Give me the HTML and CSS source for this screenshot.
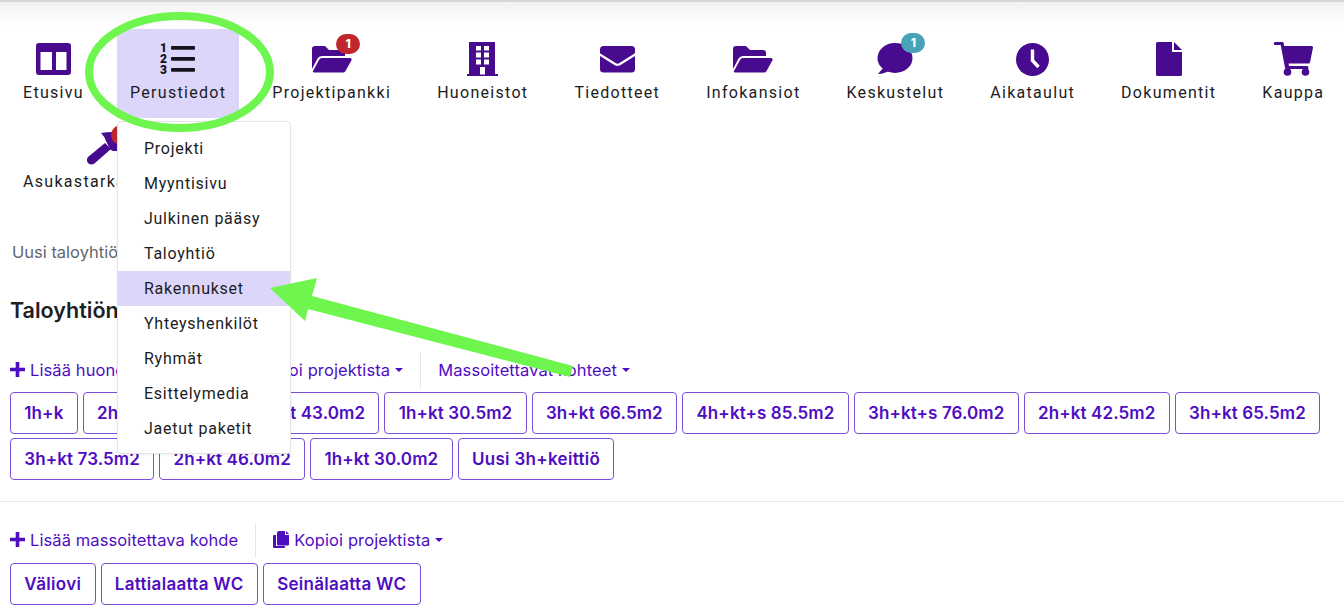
FILE: index.html
```html
<!DOCTYPE html>
<html lang="fi">
<head>
<meta charset="utf-8">
<title>Taloyhtiön huoneistotyypit</title>
<link rel="stylesheet" href="styles.css">
</head>
<body>
<div class="topshade"></div>
<nav class="nav">
  <a class="nav-item">
    <span class="icon-box"><svg width="35" height="32" viewBox="0 0 35 32"><path fill-rule="evenodd" d="M3 0h29a3 3 0 0 1 3 3v26a3 3 0 0 1-3 3H3a3 3 0 0 1-3-3V3a3 3 0 0 1 3-3zM4.500 9v18h11.500V9zM20 9v18h10.500V9z"/></svg></span>
    <span class="nav-label">Etusivu</span>
  </a>
  <div class="nav-group">
    <a class="nav-item nav-item-active">
      <span class="icon-box icon-dark"><svg class="icon-list" width="36" height="32" viewBox="0 0 36 32"><text class="num" x="0" y="9">1</text><text class="num" x="0" y="20">2</text><text class="num" x="0" y="31">3</text><rect x="11" y="3" width="24" height="3.800" rx="1"/><rect x="11" y="14" width="24" height="3.800" rx="1"/><rect x="11" y="25" width="24" height="3.800" rx="1"/></svg></span>
      <span class="nav-label">Perustiedot</span>
    </a>
    <ul class="menu">
      <li class="menu-item">Projekti</li>
      <li class="menu-item">Myyntisivu</li>
      <li class="menu-item">Julkinen pääsy</li>
      <li class="menu-item">Taloyhtiö</li>
      <li class="menu-item menu-item-active">Rakennukset</li>
      <li class="menu-item">Yhteyshenkilöt</li>
      <li class="menu-item">Ryhmät</li>
      <li class="menu-item">Esittelymedia</li>
      <li class="menu-item">Jaetut paketit</li>
    </ul>
  </div>
  <a class="nav-item">
    <span class="icon-box"><svg width="40" height="27" viewBox="0 0 40 27"><path d="M0 3a3 3 0 0 1 3-3h10l4 4h13a3 3 0 0 1 3 3v3H10a5 5 0 0 0-4.500 2.500L0 23z"/><path d="M10 12h28a1.600 1.600 0 0 1 1.500 2.300L33.500 25a3 3 0 0 1-2.600 1.500H2a1 1 0 0 1-1-1.500l6-11a3.500 3.500 0 0 1 3-2z"/></svg></span>
    <span class="badge badge-red">1</span>
    <span class="nav-label">Projektipankki</span>
  </a>
  <a class="nav-item">
    <span class="icon-box"><svg width="31" height="35" viewBox="0 0 31 35"><path fill-rule="evenodd" d="M2 0h26v32h3v2H0v-2h2zM9 4v4.500h5V4zM17 4v4.500h5V4zM9 10.500v5h5v-5zM17 10.500v5h5v-5zM9 17.500v5h5v-5zM17 17.500v5h5v-5zM13 25v7.500h5V25z"/></svg></span>
    <span class="nav-label">Huoneistot</span>
  </a>
  <a class="nav-item">
    <span class="icon-box"><svg width="35" height="27" viewBox="0 0 35 27"><rect width="35" height="26.500" rx="3.500"/><path class="cut" d="M-1 8l16 10q2.500 1.500 5 0L36 8"/></svg></span>
    <span class="nav-label">Tiedotteet</span>
  </a>
  <a class="nav-item">
    <span class="icon-box"><svg width="40" height="27" viewBox="0 0 40 27"><path d="M0 3a3 3 0 0 1 3-3h10l4 4h13a3 3 0 0 1 3 3v3H10a5 5 0 0 0-4.500 2.500L0 23z"/><path d="M10 12h28a1.600 1.600 0 0 1 1.500 2.300L33.500 25a3 3 0 0 1-2.600 1.500H2a1 1 0 0 1-1-1.500l6-11a3.500 3.500 0 0 1 3-2z"/></svg></span>
    <span class="nav-label">Infokansiot</span>
  </a>
  <a class="nav-item">
    <span class="icon-box"><svg width="36" height="32" viewBox="0 0 36 32"><ellipse cx="18" cy="15" rx="17.500" ry="15"/><path d="M7 24L1 31q4 .5 11-3z"/></svg></span>
    <span class="badge badge-teal">1</span>
    <span class="nav-label">Keskustelut</span>
  </a>
  <a class="nav-item">
    <span class="icon-box"><svg width="33" height="33" viewBox="0 0 33 33"><circle cx="16.500" cy="16.500" r="16.500"/><path class="hand" d="M16.500 6.500v11l6 6.500"/></svg></span>
    <span class="nav-label">Aikataulut</span>
  </a>
  <a class="nav-item">
    <span class="icon-box"><svg width="26" height="34" viewBox="0 0 26 34"><path d="M1.500 0H16v10h10v22.500a1.500 1.500 0 0 1-1.500 1.500h-23A1.500 1.500 0 0 1 0 32.500v-31A1.500 1.500 0 0 1 1.500 0z"/><path d="M18 0l8 8h-8z"/></svg></span>
    <span class="nav-label">Dokumentit</span>
  </a>
  <a class="nav-item">
    <span class="icon-box"><svg width="39" height="34" viewBox="0 0 39 34"><path d="M1.200 0h7a1.500 1.500 0 0 1 1.500 1.200L10.200 4h27.300a1.500 1.500 0 0 1 1.500 1.800l-3 14.500a1.500 1.500 0 0 1-1.500 1.200H14.500l.5 2.500H33a1.500 1.500 0 0 1 0 3H12.500a1.500 1.500 0 0 1-1.500-1.200L6.700 3H1.200a1.500 1.500 0 0 1 0-3z"/><circle cx="13.500" cy="30" r="3.800"/><circle cx="31.500" cy="30" r="3.800"/></svg></span>
    <span class="nav-label">Kauppa</span>
  </a>
  <a class="nav-item">
    <span class="icon-box icon-brush"><svg width="32" height="34" viewBox="0 0 32 34"><path d="M1 26L18 12l6 6L8 32a4.500 4.500 0 0 1-7-6z"/><path d="M14 2q6-1 12-1l6 3v16h-6q-3-1-4-4l-3-6q-1-4-5-8z"/></svg></span>
    <span class="badge badge-red badge-second">1</span>
    <span class="nav-label">Asukastarkastukset</span>
  </a>
</nav>
<main class="main">
  <p class="crumb">Uusi taloyhtiö</p>
  <h2 class="title">Taloyhtiön huoneistotyypit</h2>
  <div class="toolbar">
    <a class="tool tool-first"><svg class="tool-plus" width="15" height="15" viewBox="0 0 15 15"><path d="M5.700 0h3.600v5.700H15v3.600H9.300V15H5.700V9.300H0V5.700h5.700z"/></svg>Lisää huoneistotyyppi</a>
    <a class="tool tool-sep"><svg class="tool-copy" width="16" height="17" viewBox="0 0 16 17"><path d="M6 0h6v4h4v9.500a1 1 0 0 1-1 1H5a1 1 0 0 1-1-1V2a2 2 0 0 1 2-2z"/><path d="M13 0l3 3h-3z"/><path d="M0 5a1 1 0 0 1 1-1h2v11h9v1a1 1 0 0 1-1 1H1a1 1 0 0 1-1-1z"/></svg>Kopioi projektista<i class="caret"></i></a>
    <a class="tool tool-sep">Massoitettavat kohteet<i class="caret"></i></a>
  </div>
  <div class="buttons">
    <a class="btn">1h+k</a>
    <a class="btn">2h+kt 45.5m2</a>
    <a class="btn">2h+kt 43.0m2</a>
    <a class="btn">1h+kt 30.5m2</a>
    <a class="btn">3h+kt 66.5m2</a>
    <a class="btn">4h+kt+s 85.5m2</a>
    <a class="btn">3h+kt+s 76.0m2</a>
    <a class="btn">2h+kt 42.5m2</a>
    <a class="btn">3h+kt 65.5m2</a>
    <a class="btn">3h+kt 73.5m2</a>
    <a class="btn">2h+kt 46.0m2</a>
    <a class="btn">1h+kt 30.0m2</a>
    <a class="btn btn-word">Uusi 3h+keittiö</a>
  </div>
  <hr class="rule">
  <div class="toolbar toolbar-last">
    <a class="tool"><svg class="tool-plus" width="15" height="15" viewBox="0 0 15 15"><path d="M5.700 0h3.600v5.700H15v3.600H9.300V15H5.700V9.300H0V5.700h5.700z"/></svg>Lisää massoitettava kohde</a>
    <a class="tool tool-sep"><svg class="tool-copy" width="16" height="17" viewBox="0 0 16 17"><path d="M6 0h6v4h4v9.500a1 1 0 0 1-1 1H5a1 1 0 0 1-1-1V2a2 2 0 0 1 2-2z"/><path d="M13 0l3 3h-3z"/><path d="M0 5a1 1 0 0 1 1-1h2v11h9v1a1 1 0 0 1-1 1H1a1 1 0 0 1-1-1z"/></svg>Kopioi projektista<i class="caret"></i></a>
  </div>
  <div class="buttons">
    <a class="btn btn-word">Väliovi</a>
    <a class="btn btn-word">Lattialaatta WC</a>
    <a class="btn btn-word">Seinälaatta WC</a>
  </div>
</main>
<svg class="annotation" width="1344" height="614" viewBox="0 0 1344 614">
  <ellipse class="anno-ring" cx="179.500" cy="72" rx="90.500" ry="56"/>
  <path class="anno-arrow" d="M270 288L317 278L312 296L573 366L570 377L308 309L305 321z"/>
</svg>
</body>
</html>
```
FILE: styles.css
```css
* { box-sizing: border-box; }
html, body { margin: 0; padding: 0; }
body {
  position: relative;
  height: 614px;
  overflow: hidden;
  background: #fff;
  font-family: "Inter", "Liberation Sans", sans-serif;
  color: #212529;
}
.topshade {
  height: 29px;
  border-top: 2px solid #d6d6d6;
  background: linear-gradient(#f1f1f1, #fbfbfb 60%, #fff);
}
.nav {
  display: flex;
  flex-wrap: wrap;
  column-gap: 20px;
  padding-left: 10px;
  height: 178px;
  align-content: flex-start;
  font-family: "Roboto", "Liberation Sans", sans-serif;
}
.nav-group { position: relative; }
.nav-item {
  position: relative;
  display: flex;
  flex-direction: column;
  align-items: center;
  height: 89px;
  padding: 10px 13px 13px;
  color: #1c1c22;
}
.nav-item-active { background: #ddd6fb; }
.icon-box {
  display: flex;
  align-items: center;
  justify-content: center;
  height: 40px;
  color: #480b8f;
}
.icon-box svg { fill: currentColor; display: block; overflow: visible; }
.icon-dark { color: #15131e; }
.icon-brush { padding-right: 4px; }
.num {
  font-family: "Roboto", sans-serif;
  font-weight: 900;
  font-size: 12px;
}
.cut { fill: none; stroke: #fff; stroke-width: 2.200px; }
.hand { fill: none; stroke: #fff; stroke-width: 3.400px; }
.nav-label {
  margin-top: 2px;
  font-size: 16px;
  line-height: 24px;
  letter-spacing: 1.300px;
  white-space: nowrap;
}
.badge {
  position: absolute;
  top: 5px;
  width: 24px;
  height: 20px;
  border-radius: 10px;
  color: #fff;
  font: 800 12px/20px "Inter", sans-serif;
  text-align: center;
}
.nav-item .badge-red { left: 77px; background: #c0272d; }
.nav-item .badge-teal { left: 68px; top: 4px; background: #47a3b8; }
.nav-item .badge-second { left: 101px; top: 7px; }
.menu {
  position: absolute;
  z-index: 5;
  top: 92px;
  left: 0;
  width: 174px;
  height: 333px;
  margin: 0;
  padding: 9px 0;
  list-style: none;
  background: #fff;
  border: 1px solid #e4e4e8;
  border-radius: 4px;
  box-shadow: 0 1px 3px rgba(0, 0, 0, .06);
}
.menu-item {
  height: 35px;
  padding-left: 26px;
  font-size: 16px;
  line-height: 35px;
  letter-spacing: .75px;
  color: #1c1c22;
}
.menu-item-active { background: #ddd6fb; }
.main { padding-left: 10px; }
.crumb {
  margin: 33px 0 0;
  padding-left: 2px;
  height: 33px;
  font-size: 16.500px;
  line-height: 24px;
  color: #5f6770;
}
.title {
  margin: -6px 0 0;
  height: 86px;
  padding-top: 31px;
  font-size: 21.500px;
  line-height: 24px;
  font-weight: 600;
  color: #1d1f24;
}
.toolbar {
  display: flex;
  align-items: center;
  height: 35px;
  margin-bottom: 4px;
}
.toolbar-last { margin-bottom: 5px; }
.tool {
  display: flex;
  align-items: center;
  height: 35px;
  padding: 0 17px 2px 0;
  font-size: 16.500px;
  letter-spacing: .1px;
  color: #4f0dc2;
  white-space: nowrap;
}
.tool-first { width: 205px; overflow: hidden; }
.tool svg { flex: none; fill: currentColor; margin-right: 5px; }
.tool-sep {
  padding-left: 17px;
  border-left: 1px solid #e6e6ea;
}
.caret {
  width: 0;
  height: 0;
  margin-left: 5px;
  border: 4.500px solid transparent;
  border-top-color: #4f0dc2;
  border-bottom: 0;
}
.buttons {
  display: flex;
  flex-wrap: wrap;
  gap: 4px 5px;
}
.btn {
  height: 42px;
  padding: 0 13.300px;
  border: 1px solid #7a4fd6;
  border-radius: 4px;
  font-size: 17px;
  font-weight: 600;
  letter-spacing: .1px;
  line-height: 40px;
  color: #4f0dc2;
  white-space: nowrap;
}
.btn-word { letter-spacing: .3px; }
.rule {
  height: 1px;
  margin: 21px 0 21px -10px;
  border: 0;
  background: #e6e6e6;
}
.annotation {
  position: absolute;
  z-index: 10;
  top: 0;
  left: 0;
  pointer-events: none;
}
.anno-ring { fill: none; stroke: #6ff64e; stroke-width: 8px; }
.anno-arrow { fill: #6ff64e; }
```
